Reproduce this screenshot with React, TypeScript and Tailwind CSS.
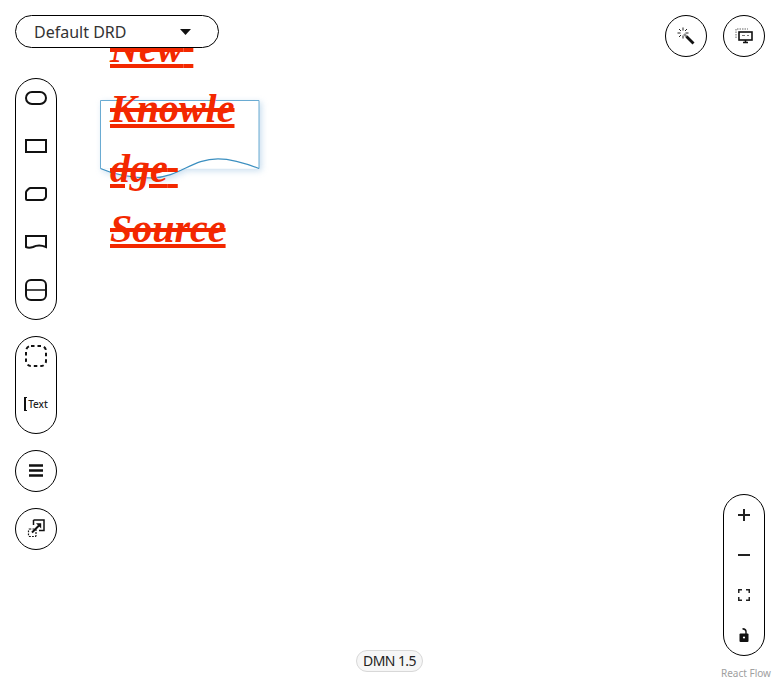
import React from "react";

const font = "[font-family:'Noto_Sans',sans-serif]";

function Item({ children }: { children: React.ReactNode }) {
  return <div className="mb-2 flex h-10 w-10 items-center justify-center pb-0.5">{children}</div>;
}

function Ctl({ children }: { children: React.ReactNode }) {
  return <div className="flex h-10 w-10 items-center justify-center">{children}</div>;
}

function Round({ children }: { children: React.ReactNode }) {
  return (
    <div className="flex h-[42px] w-[42px] items-center justify-center rounded-full border border-black bg-white">
      {children}
    </div>
  );
}

const shape = { fill: "none", stroke: "#111", strokeWidth: 2 };

export default function App() {
  return (
    <div className={`relative h-[680px] w-[780px] overflow-hidden bg-white ${font}`}>
      {/* node */}
      <svg className="absolute left-[100px] top-[100px] drop-shadow-[2px_2px_3px_rgba(100,160,210,0.35)]" width="160" height="80" viewBox="0 0 160 80">
        <path d="M0.5 68.5 V0.5 H159 V68.5" fill="#fff" stroke="#6aabd2" strokeWidth="1" />
        <path
          d="M159 68.5 C140 61 128 58.8 118 58.8 C92 58.8 80 77 52 78 C35 78 15 75 0.5 68.5"
          fill="#fff"
          stroke="#3b8fc0"
          strokeWidth="1.2"
        />
      </svg>
      <div className="absolute left-[110px] top-[19px] w-[140px] whitespace-pre-wrap break-words text-[40px] font-bold italic leading-[60px] text-[#f32800] [text-decoration-line:underline_line-through] [font-family:'Liberation_Serif',serif]">
        New Knowledge Source
      </div>

      {/* DRD selector */}
      <div className="absolute left-[15px] top-[15px] flex h-[33px] w-[204px] items-center justify-between rounded-full border border-black bg-white pl-[18px] pr-[27px] text-[16px] text-[#333]">
        <span>Default DRD</span>
        <svg width="11" height="6" viewBox="0 0 11 6"><path d="M0 0 H11 L5.5 6 Z" fill="#111" /></svg>
      </div>

      {/* left palette */}
      <div className="absolute left-[15px] top-[78px] flex flex-col gap-4">
        <div className="flex w-[42px] flex-col rounded-full border border-black bg-white">
          <Item>
            <svg width="24" height="16" viewBox="0 0 24 16"><rect x="2" y="2" width="20" height="12" rx="6" {...shape} /></svg>
          </Item>
          <Item>
            <svg width="24" height="16" viewBox="0 0 24 16"><rect x="2" y="2" width="20" height="12" {...shape} /></svg>
          </Item>
          <Item>
            <svg width="24" height="16" viewBox="0 0 24 16"><path d="M6.5 2 H20.5 Q22 2 22 3.5 V10.5 Q22 11.5 21 12.5 L20 13.5 Q19.5 14 18.5 14 H3 Q2 14 2 13 V6.5 Q2 5.5 3 4.5 L4.5 3 Q5.5 2 6.5 2 Z" {...shape} /></svg>
          </Item>
          <Item>
            <svg width="24" height="16" viewBox="0 0 24 16"><path d="M2 2 H22 V13 C17 11 13 11 9 13 C6 14 4 14 2 13 Z" {...shape} /></svg>
          </Item>
          <Item>
            <svg width="24" height="24" viewBox="0 0 24 24"><rect x="2" y="2" width="20" height="20" rx="5" {...shape} /><path d="M2 12 H22" stroke="#111" strokeWidth="1.5" /></svg>
          </Item>
        </div>

        <div className="flex w-[42px] flex-col rounded-full border border-black bg-white">
          <Item>
            <svg width="24" height="24" viewBox="0 0 24 24"><rect x="2" y="2" width="20" height="20" rx="5" fill="none" stroke="#111" strokeWidth="2" strokeDasharray="3.5 3" /></svg>
          </Item>
          <Item>
            <div className="flex items-center">
              <span className="mr-[1px] h-[14px] w-[3px] border-y-[1px] border-l-2 border-[#111]" />
              <span className="text-[10px] font-medium leading-none text-[#222]">Text</span>
            </div>
          </Item>
        </div>

        <Round>
          <svg className="mb-0.5" width="14" height="13" viewBox="0 0 14 13"><path d="M0 1.5 H14 M0 6.5 H14 M0 11.5 H14" stroke="#111" strokeWidth="2.4" /></svg>
        </Round>

        <Round>
          <svg className="mb-0.5" width="18" height="18" viewBox="0 0 18 18">
            <rect x="1.5" y="10" width="7.5" height="7.5" rx="1" fill="none" stroke="#111" strokeWidth="1.2" strokeDasharray="1.8 1.2" />
            <path d="M6.5 1 H17 V11.5 H12" fill="none" stroke="#111" strokeWidth="1.5" />
            <path d="M6.5 1 V6" stroke="#111" strokeWidth="1.5" />
            <path d="M5 13.5 L12 6.5" stroke="#111" strokeWidth="2" />
            <path d="M9 4.2 H14.2 V9.4 Z" fill="#111" />
          </svg>
        </Round>
      </div>

      {/* top right */}
      <div className="absolute left-[665px] top-[15px] flex gap-4">
        <Round>
          <svg width="18" height="18" viewBox="0 0 18 18">
            <path d="M7 7 L10 10" stroke="#888" strokeWidth="2.4" />
            <path d="M9.5 9.5 L16.5 16.5" stroke="#111" strokeWidth="2.8" />
            <path d="M6 0.5 V3.5 M6 8.5 V11.5 M0.5 6 H3.5 M8.5 6 H11.5 M2 2 L4 4 M10 2 L8 4 M2 10 L4 8" stroke="#222" strokeWidth="1" />
          </svg>
        </Round>
        <Round>
          <svg width="18" height="16" viewBox="0 0 18 16">
            <path d="M1 10 V1 H13" fill="none" stroke="#666" strokeWidth="1" strokeDasharray="1.5 1" />
            <rect x="4" y="4" width="13" height="8" fill="#fff" stroke="#111" strokeWidth="1.6" />
            <path d="M7 7.5 H10 M12 7.5 H14" stroke="#777" strokeWidth="1" />
            <path d="M8 14.5 H13 M10.5 12 V14" stroke="#111" strokeWidth="1.6" />
          </svg>
        </Round>
      </div>

      {/* controls */}
      <div className="absolute left-[723px] top-[494px] flex w-[42px] flex-col rounded-full border border-black bg-white">
        <Ctl>
          <svg width="12" height="12" viewBox="0 0 12 12"><path d="M6 0 V12 M0 6 H12" stroke="#222" strokeWidth="2" /></svg>
        </Ctl>
        <Ctl>
          <svg width="12" height="2" viewBox="0 0 12 2"><path d="M0 1 H12" stroke="#222" strokeWidth="2" /></svg>
        </Ctl>
        <Ctl>
          <svg width="12" height="12" viewBox="0 0 12 12"><path d="M0.75 4 V0.75 H4 M8 0.75 H11.25 V4 M11.25 8 V11.25 H8 M4 11.25 H0.75 V8" fill="none" stroke="#222" strokeWidth="1.5" /></svg>
        </Ctl>
        <Ctl>
          <svg width="10" height="14" viewBox="0 0 10 14">
            <path d="M7 6 V3.5 C7 2 5.8 1 3.5 0.8" fill="none" stroke="#111" strokeWidth="1.4" />
            <rect x="0.5" y="5.5" width="9" height="8.5" rx="1" fill="#111" />
            <circle cx="5" cy="9.5" r="1.1" fill="#fff" />
          </svg>
        </Ctl>
      </div>

      {/* version */}
      <div className="absolute left-[356px] top-[650px] flex h-[22px] w-[67px] items-center justify-center rounded-full border border-[#d8d8d8] bg-[#f6f6f6] pb-0.5 text-[14px] tracking-[-0.6px] text-[#222]">
        DMN 1.5
      </div>

      <div className="absolute left-[721px] top-[666px] text-[10px] leading-[14px] text-[#a0a0a0]">React Flow</div>
    </div>
  );
}
